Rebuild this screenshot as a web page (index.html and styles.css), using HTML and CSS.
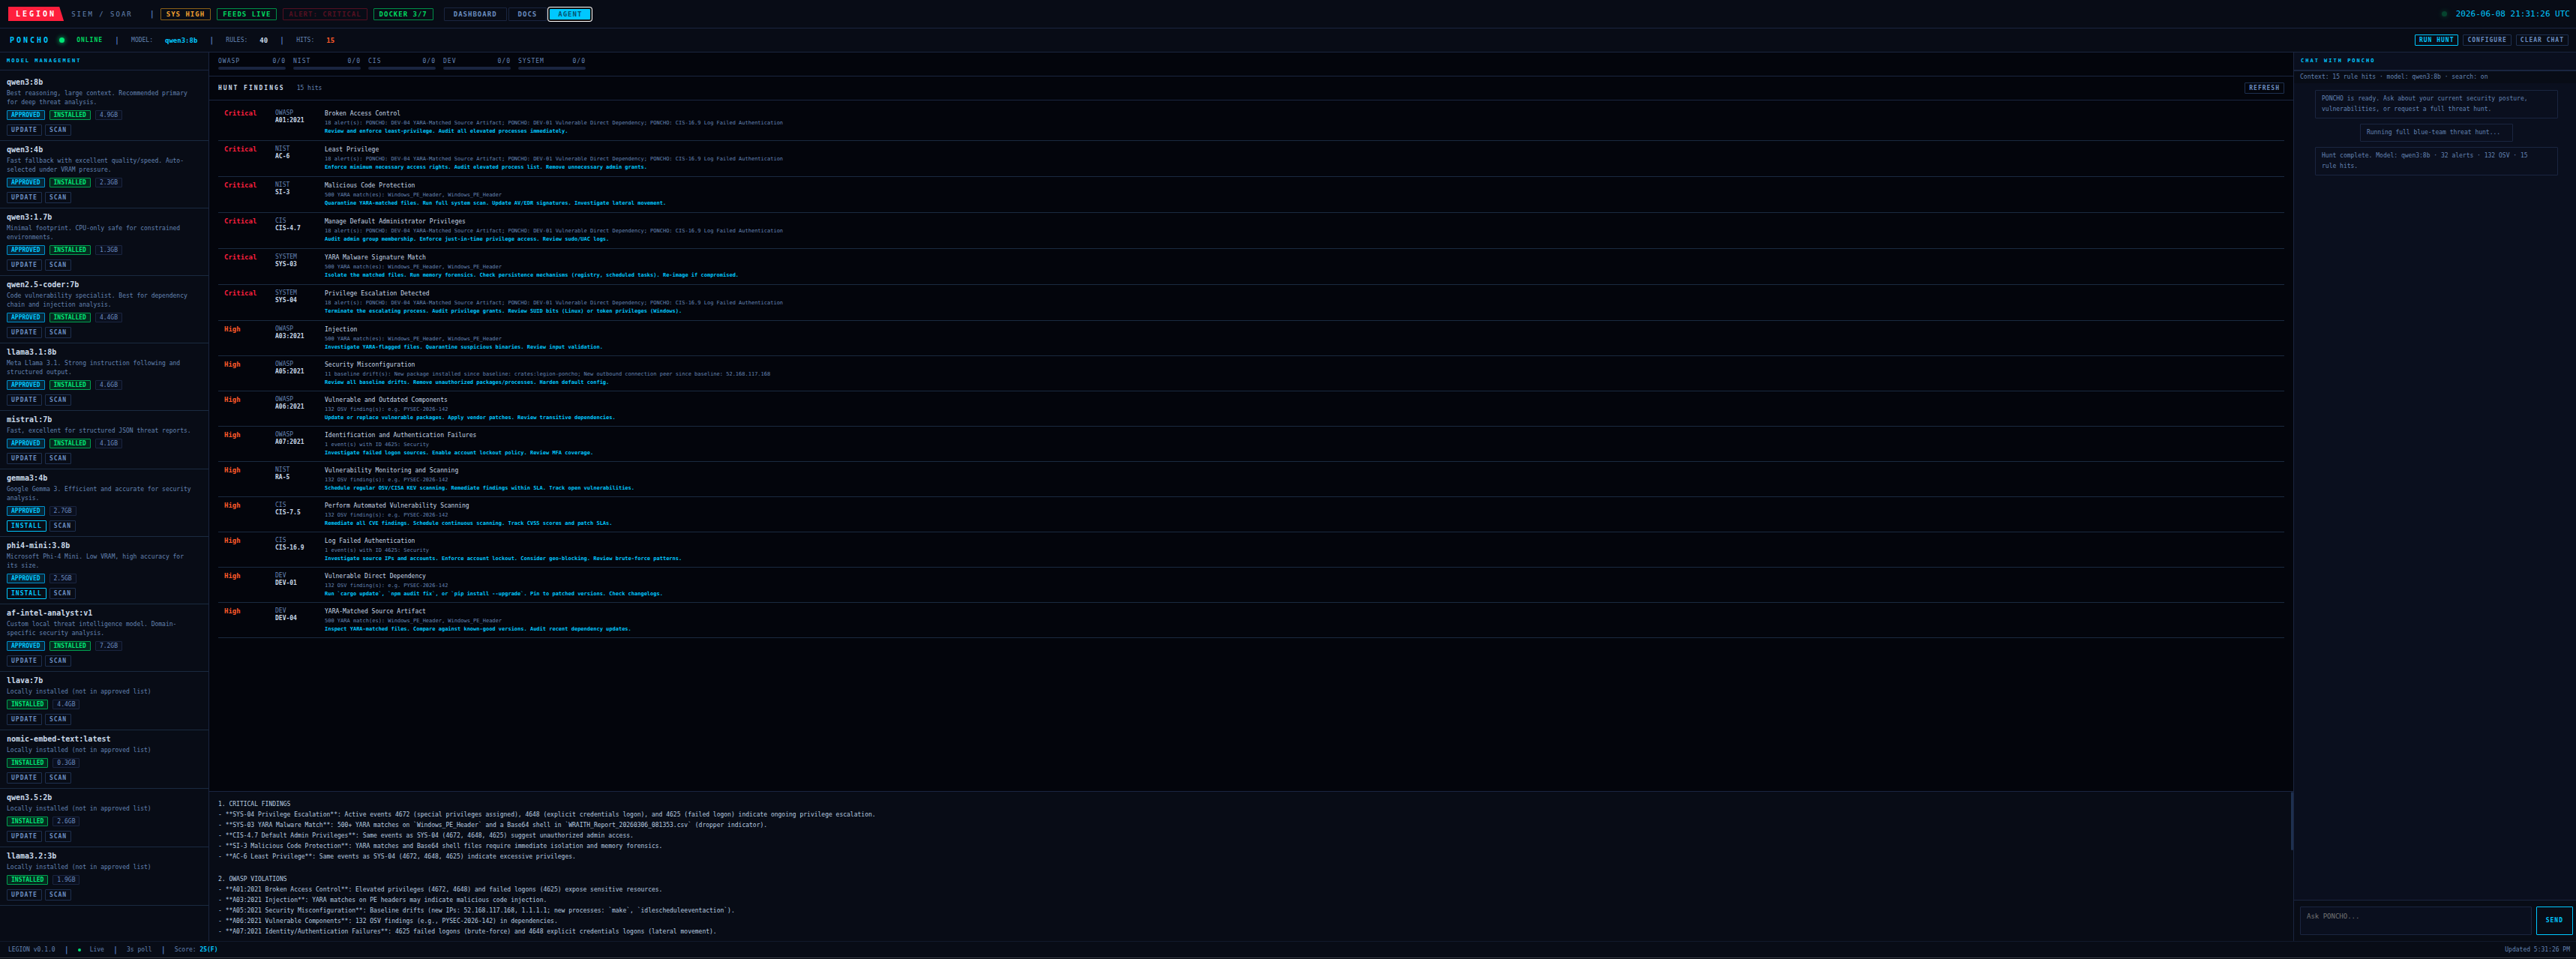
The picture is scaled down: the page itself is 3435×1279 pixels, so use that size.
FILE: index.html
```html
<!DOCTYPE html>
<html lang="en">
<head>
    <meta charset="UTF-8">
    <meta name="viewport" content="width=device-width, initial-scale=1.0">
    <title>LEGION SIEM / SOAR - Agent</title>
    <link rel="stylesheet" href="styles.css">
</head>
<body>

<!-- Top bar -->
<header class="topbar">
    <span class="logo">LEGION</span>
    <span class="product">SIEM / SOAR</span>
    <span class="sep">|</span>
    <div class="chips">
        <span class="chip amber">SYS HIGH</span>
        <span class="chip green">FEEDS LIVE</span>
        <span class="chip red">ALERT: CRITICAL</span>
        <span class="chip green">DOCKER 3/7</span>
    </div>
    <nav class="tabs">
        <button type="button" class="tab">DASHBOARD</button>
        <button type="button" class="tab">DOCS</button>
        <button type="button" class="tab active">AGENT</button>
    </nav>
    <div class="clock">
        <span class="dot dim"></span>
        <time>2026-06-08 21:31:26 UTC</time>
    </div>
</header>

<!-- Agent status -->
<div class="agentbar">
    <div class="agent-name">PONCHO <span class="dot"></span></div>
    <span class="online">ONLINE</span>
    <span class="sep">|</span>
    <span>MODEL:</span>
    <b class="cyan">qwen3:8b</b>
    <span class="sep">|</span>
    <span>RULES:</span>
    <b class="light">40</b>
    <span class="sep">|</span>
    <span>HITS:</span>
    <b class="orange">15</b>
    <div class="agent-actions">
        <button type="button" class="btn primary">RUN HUNT</button>
        <button type="button" class="btn">CONFIGURE</button>
        <button type="button" class="btn">CLEAR CHAT</button>
    </div>
</div>

<main class="layout">
    <!-- Models -->
    <aside class="models">
        <h2 class="panel-head">MODEL MANAGEMENT</h2>
        <div class="model-list">
            <div class="model">
                <h3>qwen3:8b</h3>
                <p>Best reasoning, large context. Recommended primary for deep threat analysis.</p>
                <div class="tags"><span class="tag approved">APPROVED</span><span class="tag installed">INSTALLED</span><span class="tag">4.9GB</span></div>
                <div class="actions"><button type="button" class="btn">UPDATE</button><button type="button" class="btn">SCAN</button></div>
            </div>
            <div class="model">
                <h3>qwen3:4b</h3>
                <p>Fast fallback with excellent quality/speed. Auto-selected under VRAM pressure.</p>
                <div class="tags"><span class="tag approved">APPROVED</span><span class="tag installed">INSTALLED</span><span class="tag">2.3GB</span></div>
                <div class="actions"><button type="button" class="btn">UPDATE</button><button type="button" class="btn">SCAN</button></div>
            </div>
            <div class="model">
                <h3>qwen3:1.7b</h3>
                <p>Minimal footprint. CPU-only safe for constrained environments.</p>
                <div class="tags"><span class="tag approved">APPROVED</span><span class="tag installed">INSTALLED</span><span class="tag">1.3GB</span></div>
                <div class="actions"><button type="button" class="btn">UPDATE</button><button type="button" class="btn">SCAN</button></div>
            </div>
            <div class="model">
                <h3>qwen2.5-coder:7b</h3>
                <p>Code vulnerability specialist. Best for dependency chain and injection analysis.</p>
                <div class="tags"><span class="tag approved">APPROVED</span><span class="tag installed">INSTALLED</span><span class="tag">4.4GB</span></div>
                <div class="actions"><button type="button" class="btn">UPDATE</button><button type="button" class="btn">SCAN</button></div>
            </div>
            <div class="model">
                <h3>llama3.1:8b</h3>
                <p>Meta Llama 3.1. Strong instruction following and structured output.</p>
                <div class="tags"><span class="tag approved">APPROVED</span><span class="tag installed">INSTALLED</span><span class="tag">4.6GB</span></div>
                <div class="actions"><button type="button" class="btn">UPDATE</button><button type="button" class="btn">SCAN</button></div>
            </div>
            <div class="model">
                <h3>mistral:7b</h3>
                <p>Fast, excellent for structured JSON threat reports.</p>
                <div class="tags"><span class="tag approved">APPROVED</span><span class="tag installed">INSTALLED</span><span class="tag">4.1GB</span></div>
                <div class="actions"><button type="button" class="btn">UPDATE</button><button type="button" class="btn">SCAN</button></div>
            </div>
            <div class="model">
                <h3>gemma3:4b</h3>
                <p>Google Gemma 3. Efficient and accurate for security analysis.</p>
                <div class="tags"><span class="tag approved">APPROVED</span><span class="tag">2.7GB</span></div>
                <div class="actions"><button type="button" class="btn primary">INSTALL</button><button type="button" class="btn">SCAN</button></div>
            </div>
            <div class="model">
                <h3>phi4-mini:3.8b</h3>
                <p>Microsoft Phi-4 Mini. Low VRAM, high accuracy for its size.</p>
                <div class="tags"><span class="tag approved">APPROVED</span><span class="tag">2.5GB</span></div>
                <div class="actions"><button type="button" class="btn primary">INSTALL</button><button type="button" class="btn">SCAN</button></div>
            </div>
            <div class="model">
                <h3>af-intel-analyst:v1</h3>
                <p>Custom local threat intelligence model. Domain-specific security analysis.</p>
                <div class="tags"><span class="tag approved">APPROVED</span><span class="tag installed">INSTALLED</span><span class="tag">7.2GB</span></div>
                <div class="actions"><button type="button" class="btn">UPDATE</button><button type="button" class="btn">SCAN</button></div>
            </div>
            <div class="model">
                <h3>llava:7b</h3>
                <p>Locally installed (not in approved list)</p>
                <div class="tags"><span class="tag installed">INSTALLED</span><span class="tag">4.4GB</span></div>
                <div class="actions"><button type="button" class="btn">UPDATE</button><button type="button" class="btn">SCAN</button></div>
            </div>
            <div class="model">
                <h3>nomic-embed-text:latest</h3>
                <p>Locally installed (not in approved list)</p>
                <div class="tags"><span class="tag installed">INSTALLED</span><span class="tag">0.3GB</span></div>
                <div class="actions"><button type="button" class="btn">UPDATE</button><button type="button" class="btn">SCAN</button></div>
            </div>
            <div class="model">
                <h3>qwen3.5:2b</h3>
                <p>Locally installed (not in approved list)</p>
                <div class="tags"><span class="tag installed">INSTALLED</span><span class="tag">2.6GB</span></div>
                <div class="actions"><button type="button" class="btn">UPDATE</button><button type="button" class="btn">SCAN</button></div>
            </div>
            <div class="model">
                <h3>llama3.2:3b</h3>
                <p>Locally installed (not in approved list)</p>
                <div class="tags"><span class="tag installed">INSTALLED</span><span class="tag">1.9GB</span></div>
                <div class="actions"><button type="button" class="btn">UPDATE</button><button type="button" class="btn">SCAN</button></div>
            </div>
        </div>
    </aside>

    <!-- Hunt results -->
    <section class="hunt">
        <div class="frameworks">
            <div class="framework"><span>OWASP</span><span>0/0</span><i class="bar"></i></div>
            <div class="framework"><span>NIST</span><span>0/0</span><i class="bar"></i></div>
            <div class="framework"><span>CIS</span><span>0/0</span><i class="bar"></i></div>
            <div class="framework"><span>DEV</span><span>0/0</span><i class="bar"></i></div>
            <div class="framework"><span>SYSTEM</span><span>0/0</span><i class="bar"></i></div>
        </div>
        <div class="hunt-head">
            <h2>HUNT FINDINGS</h2>
            <span>15 hits</span>
            <button type="button" class="btn">REFRESH</button>
        </div>
        <div class="findings">
            <table>
                <colgroup><col class="col-severity"><col class="col-rule"><col></colgroup>
                <tbody>
                <tr class="critical">
                    <td class="severity">Critical</td>
                    <td class="rule">OWASP<b>A01:2021</b></td>
                    <td><div class="name">Broken Access Control</div><div class="evidence">18 alert(s): PONCHO: DEV-04 YARA-Matched Source Artifact; PONCHO: DEV-01 Vulnerable Direct Dependency; PONCHO: CIS-16.9 Log Failed Authentication</div><div class="fix">Review and enforce least-privilege. Audit all elevated processes immediately.</div></td>
                </tr>
                <tr class="critical">
                    <td class="severity">Critical</td>
                    <td class="rule">NIST<b>AC-6</b></td>
                    <td><div class="name">Least Privilege</div><div class="evidence">18 alert(s): PONCHO: DEV-04 YARA-Matched Source Artifact; PONCHO: DEV-01 Vulnerable Direct Dependency; PONCHO: CIS-16.9 Log Failed Authentication</div><div class="fix">Enforce minimum necessary access rights. Audit elevated process list. Remove unnecessary admin grants.</div></td>
                </tr>
                <tr class="critical">
                    <td class="severity">Critical</td>
                    <td class="rule">NIST<b>SI-3</b></td>
                    <td><div class="name">Malicious Code Protection</div><div class="evidence">500 YARA match(es): Windows_PE_Header, Windows_PE_Header</div><div class="fix">Quarantine YARA-matched files. Run full system scan. Update AV/EDR signatures. Investigate lateral movement.</div></td>
                </tr>
                <tr class="critical">
                    <td class="severity">Critical</td>
                    <td class="rule">CIS<b>CIS-4.7</b></td>
                    <td><div class="name">Manage Default Administrator Privileges</div><div class="evidence">18 alert(s): PONCHO: DEV-04 YARA-Matched Source Artifact; PONCHO: DEV-01 Vulnerable Direct Dependency; PONCHO: CIS-16.9 Log Failed Authentication</div><div class="fix">Audit admin group membership. Enforce just-in-time privilege access. Review sudo/UAC logs.</div></td>
                </tr>
                <tr class="critical">
                    <td class="severity">Critical</td>
                    <td class="rule">SYSTEM<b>SYS-03</b></td>
                    <td><div class="name">YARA Malware Signature Match</div><div class="evidence">500 YARA match(es): Windows_PE_Header, Windows_PE_Header</div><div class="fix">Isolate the matched files. Run memory forensics. Check persistence mechanisms (registry, scheduled tasks). Re-image if compromised.</div></td>
                </tr>
                <tr class="critical">
                    <td class="severity">Critical</td>
                    <td class="rule">SYSTEM<b>SYS-04</b></td>
                    <td><div class="name">Privilege Escalation Detected</div><div class="evidence">18 alert(s): PONCHO: DEV-04 YARA-Matched Source Artifact; PONCHO: DEV-01 Vulnerable Direct Dependency; PONCHO: CIS-16.9 Log Failed Authentication</div><div class="fix">Terminate the escalating process. Audit privilege grants. Review SUID bits (Linux) or token privileges (Windows).</div></td>
                </tr>
                <tr class="high">
                    <td class="severity">High</td>
                    <td class="rule">OWASP<b>A03:2021</b></td>
                    <td><div class="name">Injection</div><div class="evidence">500 YARA match(es): Windows_PE_Header, Windows_PE_Header</div><div class="fix">Investigate YARA-flagged files. Quarantine suspicious binaries. Review input validation.</div></td>
                </tr>
                <tr class="high">
                    <td class="severity">High</td>
                    <td class="rule">OWASP<b>A05:2021</b></td>
                    <td><div class="name">Security Misconfiguration</div><div class="evidence">11 baseline drift(s): New package installed since baseline: crates:legion-poncho; New outbound connection peer since baseline: 52.168.117.168</div><div class="fix">Review all baseline drifts. Remove unauthorized packages/processes. Harden default config.</div></td>
                </tr>
                <tr class="high">
                    <td class="severity">High</td>
                    <td class="rule">OWASP<b>A06:2021</b></td>
                    <td><div class="name">Vulnerable and Outdated Components</div><div class="evidence">132 OSV finding(s): e.g. PYSEC-2026-142</div><div class="fix">Update or replace vulnerable packages. Apply vendor patches. Review transitive dependencies.</div></td>
                </tr>
                <tr class="high">
                    <td class="severity">High</td>
                    <td class="rule">OWASP<b>A07:2021</b></td>
                    <td><div class="name">Identification and Authentication Failures</div><div class="evidence">1 event(s) with ID 4625: Security</div><div class="fix">Investigate failed logon sources. Enable account lockout policy. Review MFA coverage.</div></td>
                </tr>
                <tr class="high">
                    <td class="severity">High</td>
                    <td class="rule">NIST<b>RA-5</b></td>
                    <td><div class="name">Vulnerability Monitoring and Scanning</div><div class="evidence">132 OSV finding(s): e.g. PYSEC-2026-142</div><div class="fix">Schedule regular OSV/CISA KEV scanning. Remediate findings within SLA. Track open vulnerabilities.</div></td>
                </tr>
                <tr class="high">
                    <td class="severity">High</td>
                    <td class="rule">CIS<b>CIS-7.5</b></td>
                    <td><div class="name">Perform Automated Vulnerability Scanning</div><div class="evidence">132 OSV finding(s): e.g. PYSEC-2026-142</div><div class="fix">Remediate all CVE findings. Schedule continuous scanning. Track CVSS scores and patch SLAs.</div></td>
                </tr>
                <tr class="high">
                    <td class="severity">High</td>
                    <td class="rule">CIS<b>CIS-16.9</b></td>
                    <td><div class="name">Log Failed Authentication</div><div class="evidence">1 event(s) with ID 4625: Security</div><div class="fix">Investigate source IPs and accounts. Enforce account lockout. Consider geo-blocking. Review brute-force patterns.</div></td>
                </tr>
                <tr class="high">
                    <td class="severity">High</td>
                    <td class="rule">DEV<b>DEV-01</b></td>
                    <td><div class="name">Vulnerable Direct Dependency</div><div class="evidence">132 OSV finding(s): e.g. PYSEC-2026-142</div><div class="fix">Run `cargo update`, `npm audit fix`, or `pip install --upgrade`. Pin to patched versions. Check changelogs.</div></td>
                </tr>
                <tr class="high">
                    <td class="severity">High</td>
                    <td class="rule">DEV<b>DEV-04</b></td>
                    <td><div class="name">YARA-Matched Source Artifact</div><div class="evidence">500 YARA match(es): Windows_PE_Header, Windows_PE_Header</div><div class="fix">Inspect YARA-matched files. Compare against known-good versions. Audit recent dependency updates.</div></td>
                </tr>
                </tbody>
            </table>
        </div>
        <div class="report">
<pre>1. CRITICAL FINDINGS
- **SYS-04 Privilege Escalation**: Active events 4672 (special privileges assigned), 4648 (explicit credentials logon), and 4625 (failed logon) indicate ongoing privilege escalation.
- **SYS-03 YARA Malware Match**: 500+ YARA matches on `Windows_PE_Header` and a Base64 shell in `WRAITH_Report_20260306_081353.csv` (dropper indicator).
- **CIS-4.7 Default Admin Privileges**: Same events as SYS-04 (4672, 4648, 4625) suggest unauthorized admin access.
- **SI-3 Malicious Code Protection**: YARA matches and Base64 shell files require immediate isolation and memory forensics.
- **AC-6 Least Privilege**: Same events as SYS-04 (4672, 4648, 4625) indicate excessive privileges.</pre>
<pre>2. OWASP VIOLATIONS
- **A01:2021 Broken Access Control**: Elevated privileges (4672, 4648) and failed logons (4625) expose sensitive resources.
- **A03:2021 Injection**: YARA matches on PE headers may indicate malicious code injection.
- **A05:2021 Security Misconfiguration**: Baseline drifts (new IPs: 52.168.117.168, 1.1.1.1; new processes: `make`, `idlescheduleeventaction`).
- **A06:2021 Vulnerable Components**: 132 OSV findings (e.g., PYSEC-2026-142) in dependencies.
- **A07:2021 Identity/Authentication Failures**: 4625 failed logons (brute-force) and 4648 explicit credentials logons (lateral movement).</pre>
            <div class="thumb"></div>
        </div>
    </section>

    <!-- Chat -->
    <aside class="chat">
        <h2 class="panel-head">CHAT WITH PONCHO</h2>
        <div class="context">Context: 15 rule hits · model: qwen3:8b · search: on</div>
        <div class="messages">
            <p class="message">PONCHO is ready. Ask about your current security posture, vulnerabilities, or request a full threat hunt.</p>
            <p class="message">Running full blue-team threat hunt...</p>
            <p class="message">Hunt complete. Model: qwen3:8b · 32 alerts · 132 OSV · 15 rule hits.</p>
        </div>
        <form class="ask">
            <textarea aria-label="Message" placeholder="Ask PONCHO..."></textarea>
            <button type="button" class="btn primary">SEND</button>
        </form>
    </aside>
</main>

<footer class="statusbar">
    <span>LEGION v0.1.0</span>
    <span class="sep">|</span>
    <span class="live"><i></i>Live</span>
    <span class="sep">|</span>
    <span>3s poll</span>
    <span class="sep">|</span>
    <span>Score: <b class="cyan">25(F)</b></span>
    <span class="updated">Updated 5:31:26 PM</span>
</footer>

</body>
</html>
```
FILE: styles.css
```css
:root {
    --bg: #03050c;
    --panel: #080c16;
    --raised: #0a0f1e;
    --line: #1a2540;
    --text: #c8d8e8;
    --muted: #6484b4;
    --cyan: #00c8ff;
    --green: #00e676;
    --red: #ff1f3d;
    --orange: #ff5a2a;
}
* {
    box-sizing: border-box;
}
body {
    margin: 0;
    height: 100vh;
    display: flex;
    flex-direction: column;
    overflow: hidden;
    background: var(--bg);
    color: var(--muted);
    font-family: "DejaVu Sans Mono", monospace;
    font-size: 8px;
    line-height: 12px;
}
h2, h3, p, pre {
    margin: 0;
    font-family: inherit;
}
button, textarea {
    font-family: inherit;
}
.cyan { color: var(--cyan); }
.light { color: var(--text); }
.orange { color: var(--orange); }
.sep {
    color: #6a9ae0;
    font-size: 10px;
}

/* top bar */
.topbar {
    display: flex;
    align-items: center;
    height: 38px;
    padding: 0 8px 0 11px;
    background: var(--panel);
    border-bottom: 1px solid var(--line);
    font-size: 9px;
}
.logo {
    padding: 0 10px;
    background: var(--red);
    color: #fff;
    font-size: 10px;
    font-weight: bold;
    line-height: 19px;
    letter-spacing: 3px;
    clip-path: polygon(0 0, 92% 0, 100% 100%, 0 100%);
}
.product {
    margin-left: 10px;
    letter-spacing: 2px;
}
.topbar .sep {
    margin: 0 8px 0 23px;
}
.chips {
    display: flex;
    gap: 8px;
}
.chip {
    padding: 0 7px;
    border: 1px solid;
    border-radius: 1px;
    font-weight: bold;
    line-height: 14px;
    letter-spacing: 1px;
}
.chip.amber {
    color: #f0a030;
    border-color: #8a6018;
}
.chip.green {
    color: #00d860;
    border-color: #008f48;
}
.chip.red {
    color: #541021;
    border-color: #541021;
}
.tabs {
    display: flex;
    gap: 2px;
    margin-left: 14px;
}
.tab {
    height: 18px;
    padding: 0 12px;
    background: none;
    border: 1px solid var(--line);
    border-radius: 1px;
    color: #6a8cc0;
    font-size: 9px;
    font-weight: bold;
    line-height: 12px;
    letter-spacing: 1px;
    cursor: pointer;
}
.tab.active {
    padding: 0 11px;
    background: var(--cyan);
    border: 2px solid #101010;
    border-radius: 3px;
    box-shadow: 0 0 0 1px #fff;
    color: #05546e;
}
.clock {
    display: flex;
    align-items: center;
    gap: 12px;
    margin-left: auto;
    color: var(--cyan);
    font-size: 11px;
}
.dot {
    width: 7px;
    height: 7px;
    border-radius: 50%;
    background: var(--green);
    box-shadow: 0 0 6px var(--green);
}
.dot.dim {
    opacity: 0.25;
}

/* agent bar */
.agentbar {
    display: flex;
    align-items: center;
    gap: 16px;
    height: 32px;
    padding: 0 10px 0 13px;
    background: var(--panel);
    border-bottom: 1px solid var(--line);
}
.agentbar b {
    font-size: 9px;
}
.agent-name {
    display: flex;
    align-items: center;
    gap: 12px;
    color: var(--cyan);
    font-size: 10px;
    font-weight: bold;
    letter-spacing: 3px;
}
.online {
    color: #00d860;
    font-weight: bold;
    letter-spacing: 1px;
}
.agent-actions {
    display: flex;
    gap: 6px;
    margin-left: auto;
}
.btn {
    height: 15px;
    padding: 0 5px;
    background: none;
    border: 1px solid #1e3050;
    border-radius: 1px;
    color: #6a8cc0;
    font-size: 8px;
    font-weight: bold;
    line-height: 12px;
    letter-spacing: 1px;
    cursor: pointer;
}
.btn.primary {
    border-color: var(--cyan);
    color: var(--cyan);
}

/* three columns */
.layout {
    flex: 1;
    min-height: 0;
    display: grid;
    grid-template-columns: 279px 1fr 377px;
}
.panel-head {
    padding: 0 9px;
    border-bottom: 1px solid var(--line);
    color: var(--cyan);
    font-size: 7px;
    line-height: 23px;
    letter-spacing: 2px;
}

/* models */
.models {
    background: var(--panel);
    border-right: 1px solid var(--line);
    overflow: hidden;
}
.model-list {
    padding-top: 4px;
}
.model {
    padding: 6px 20px 6px 9px;
    border-bottom: 1px solid #1a2a40;
}
.model h3 {
    margin-bottom: 3px;
    color: var(--text);
    font-size: 10px;
    line-height: 12px;
}
.tags {
    display: flex;
    gap: 6px;
    margin: 4px 0 6px;
}
.tag {
    padding: 0 5px;
    background: var(--raised);
    border: 1px solid var(--line);
    border-radius: 1px;
    color: #6a8cc0;
    line-height: 11px;
}
.tag.approved {
    background: #082536;
    border-color: #0090cc;
    color: var(--cyan);
    font-weight: bold;
}
.tag.installed {
    background: #06291f;
    border-color: #00a050;
    color: var(--green);
    font-weight: bold;
}
.actions {
    display: flex;
    gap: 4px;
}

/* hunt */
.hunt {
    display: flex;
    flex-direction: column;
    min-width: 0;
    min-height: 0;
}
.frameworks {
    display: flex;
    gap: 10px;
    padding: 7px 12px 8px;
    border-bottom: 1px solid var(--line);
}
.framework {
    width: 90px;
    display: flex;
    flex-wrap: wrap;
    justify-content: space-between;
    row-gap: 2px;
    line-height: 10px;
    letter-spacing: 1px;
}
.bar {
    width: 100%;
    height: 4px;
    border-radius: 2px;
    background: var(--line);
}
.hunt-head {
    display: flex;
    align-items: center;
    gap: 16px;
    height: 32px;
    padding: 0 12px;
    border-bottom: 1px solid var(--line);
}
.hunt-head h2 {
    color: var(--text);
    font-size: 8px;
    letter-spacing: 2px;
}
.hunt-head .btn {
    margin-left: auto;
}
.findings {
    flex: 1;
    min-height: 0;
    padding: 6px 12px;
    overflow: hidden;
}
table {
    width: 100%;
    border-collapse: separate;
    border-spacing: 0;
    table-layout: fixed;
}
.col-severity { width: 68px; }
.col-rule { width: 66px; }
td {
    padding: 6px 8px;
    border-bottom: 1px solid #1a2a40;
    vertical-align: top;
}
.high td {
    padding-bottom: 5px;
}
.severity {
    font-size: 9px;
    font-weight: bold;
    line-height: 10px;
}
.critical .severity { color: var(--red); }
.high .severity { color: var(--orange); }
.rule {
    line-height: 10px;
}
.rule b {
    display: block;
    color: var(--text);
}
.name {
    margin-bottom: 1px;
    color: var(--text);
}
.evidence, .fix {
    font-size: 7px;
    line-height: 11px;
}
.fix {
    color: var(--cyan);
    font-weight: bold;
}
.report {
    position: relative;
    flex: 0 0 200px;
    padding: 10px 12px;
    overflow: hidden;
    background: var(--panel);
    border-top: 1px solid var(--line);
    color: #b8cce0;
}
.report pre {
    margin-bottom: 16px;
    line-height: 14px;
    white-space: pre-wrap;
}
.thumb {
    position: absolute;
    top: 0;
    right: 0;
    width: 3px;
    height: 39%;
    border-radius: 2px;
    background: #1e3050;
}

/* chat */
.chat {
    display: flex;
    flex-direction: column;
    min-height: 0;
    background: var(--raised);
    border-left: 1px solid var(--line);
}
.context {
    padding: 2px 8px;
    background: var(--panel);
    border-top: 1px solid var(--line);
}
.messages {
    flex: 1;
    display: flex;
    flex-direction: column;
    align-items: center;
    gap: 7px;
    padding: 9px 24px 9px 28px;
}
.message {
    padding: 4px 16px 4px 8px;
    border: 1px solid var(--line);
    border-radius: 1px;
    line-height: 14px;
}
.ask {
    display: flex;
    gap: 6px;
    padding: 8px 4px 8px 8px;
    background: var(--panel);
    border-top: 1px solid var(--line);
}
.ask textarea {
    flex: 1;
    height: 38px;
    padding: 6px 8px;
    background: var(--raised);
    border: 1px solid var(--line);
    border-radius: 1px;
    color: var(--text);
    font-size: 9px;
    line-height: 12px;
    resize: none;
}
.ask textarea::placeholder {
    color: #757575;
}
.ask .btn {
    height: 38px;
    padding: 0 12px;
}

/* status bar */
.statusbar {
    display: flex;
    align-items: center;
    gap: 12px;
    height: 23px;
    margin-bottom: 1px;
    padding: 0 8px 0 11px;
    background: var(--panel);
    border-top: 1px solid #121a2c;
    border-bottom: 1px solid #3c4048;
}
.live {
    display: flex;
    align-items: center;
    gap: 12px;
}
.live i {
    width: 4px;
    height: 4px;
    border-radius: 50%;
    background: var(--green);
}
.updated {
    margin-left: auto;
}
```
